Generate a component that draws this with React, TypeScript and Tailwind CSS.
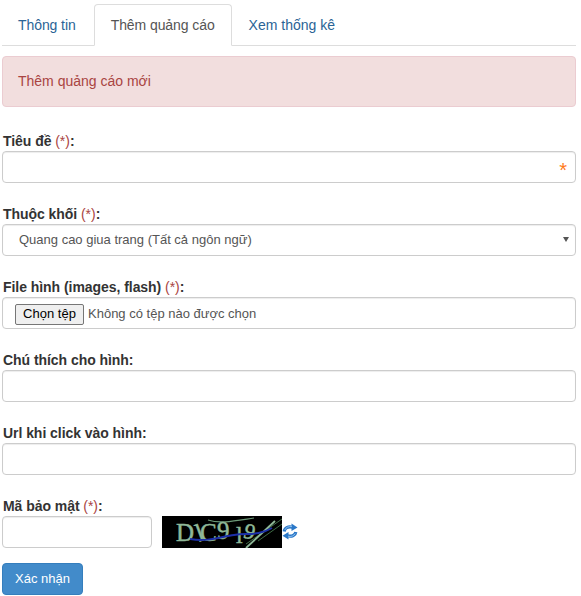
const INPUT = 'block w-full h-8 px-3 bg-white border border-[#ccc] rounded shadow-[inset_0_1px_1px_rgba(0,0,0,0.075)] text-[13px] text-[#555]';

function Label({ text, required }: { text: string; required?: boolean }) {
  return (
    <label className="block h-5 pl-px leading-5 text-sm font-bold tracking-[-0.05px] text-[#333]">
      {text}
      {required && <span className="text-[#a94442] font-normal"> (*)</span>}:
    </label>
  );
}

function Captcha() {
  return (
    <svg width="120" height="32" viewBox="0 0 120 32" className="block shrink-0">
      <rect width="120" height="32" fill="#000" />
      <path d="M46 4 C58 8 72 5 92 2" stroke="#6d9a78" strokeWidth="1.2" fill="none" />
      <path d="M84 28 L120 3 M96 25 L120 8" stroke="#3f6b46" strokeWidth="1" fill="none" />
      <g fill="#8fb898" stroke="#8fb898" strokeWidth="0.5" fontFamily="Liberation Serif, serif" fontSize="25">
        <text x="14" y="25">D</text>
        <text x="34" y="25" transform="rotate(-20 38 16)">l</text>
        <text x="38" y="25">C</text>
        <text x="55" y="23">9</text>
        <text x="74" y="27" fontSize="24">l</text>
        <text x="82" y="23" fontSize="22" transform="rotate(15 88 16)">9</text>
      </g>
      <path d="M84 32 L113 5" stroke="#8fb898" strokeWidth="1.8" fill="none" />
      <path d="M28 23 C46 26 58 21 72 19 S96 20 110 12" stroke="#1c2fa8" strokeWidth="2" fill="none" />
    </svg>
  );
}

function RefreshIcon() {
  return (
    <svg width="16" height="17" viewBox="0 0 16 17" className="block shrink-0 self-start mt-[7px]" fill="none">
      <path d="M2.2 8.5 C2.5 5 6 3 10.5 4.2" stroke="#2a78c8" strokeWidth="3.2" />
      <path d="M9.5 0.5 L15.5 4.5 L9.5 8 Z" fill="#2a78c8" />
      <path d="M13.8 9 C13.5 12 10 14 5.5 12.8" stroke="#2a78c8" strokeWidth="3.2" />
      <path d="M6.5 9 L0.5 12.8 L6.5 16.5 Z" fill="#2a78c8" />
      <path d="M2.8 7 C3.8 4.5 6.5 3.2 10 3.6" stroke="#a9d2f7" strokeWidth="0.8" />
      <path d="M6 13.2 C9 14.2 12 12.8 13.2 10.5" stroke="#a9d2f7" strokeWidth="0.8" />
    </svg>
  );
}

export default function App() {
  return (
    <div className="min-h-screen bg-white pl-[2px] pt-1 pr-[5px] text-sm font-['Liberation_Sans',Arial,sans-serif]">
      {/* Tabs */}
      <ul className="flex border-b border-[#ddd] h-[42px]">
        <li className="mr-[2px] h-[42px] px-4 pt-[11px] leading-5 tracking-[-0.08px] text-[#2a6496]">Thông tin</li>
        <li className="mr-[2px] h-[42px] px-[16px] pt-[10px] leading-5 tracking-[-0.08px] text-[#555] bg-white border border-[#ddd] border-b-white rounded-t">Thêm quảng cáo</li>
        <li className="h-[42px] px-[15px] pt-[11px] leading-5 text-[#2a6496]">Xem thống kê</li>
      </ul>

      {/* Alert */}
      <div className="mt-[10px] h-[51px] px-[15px] pb-px flex items-center bg-[#f2dede] border border-[#ebccd1] rounded text-[#a94442]">
        Thêm quảng cáo mới
      </div>

      {/* Form */}
      <form className="mt-6 flex flex-col gap-[21px]">
        <div>
          <Label text="Tiêu đề" required />
          <div className="relative">
            <input type="text" className={INPUT} />
            <span className="absolute right-[9px] top-[9px] text-[20px] leading-5 text-[#ff7a1a]">*</span>
          </div>
        </div>

        <div>
          <Label text="Thuộc khối" required />
          <div className="relative">
            <select className={`${INPUT} appearance-none !pl-4 pt-px`}>
              <option>Quang cao giua trang (Tất cả ngôn ngữ)</option>
            </select>
            <span className="absolute right-[7px] top-[13px] w-0 h-0 border-x-[3px] border-t-[5px] border-x-transparent border-t-[#555] pointer-events-none" />
          </div>
        </div>

        <div>
          <Label text="File hình (images, flash)" required />
          <div className={`${INPUT} flex items-center gap-1 pt-[3px]`}>
            <button type="button" className="h-[21px] w-[69px] bg-[#efefef] border border-[#767676] rounded-[2px] text-[13px] text-black">
              Chọn tệp
            </button>
            <span className="text-[#555]">Không có tệp nào được chọn</span>
          </div>
        </div>

        <div>
          <Label text="Chú thích cho hình" />
          <input type="text" className={INPUT} />
        </div>

        <div>
          <Label text="Url khi click vào hình" />
          <input type="text" className={INPUT} />
        </div>

        <div>
          <Label text="Mã bảo mật" required />
          <div className="flex">
            <input type="text" className={`${INPUT} !w-[150px] mr-[10px]`} />
            <Captcha />
            <RefreshIcon />
          </div>
        </div>
      </form>

      <button type="button" className="mt-[15px] h-8 w-[81px] bg-[#428bca] border border-[#357ebd] rounded text-white text-[13px]">
        Xác nhận
      </button>
    </div>
  );
}
